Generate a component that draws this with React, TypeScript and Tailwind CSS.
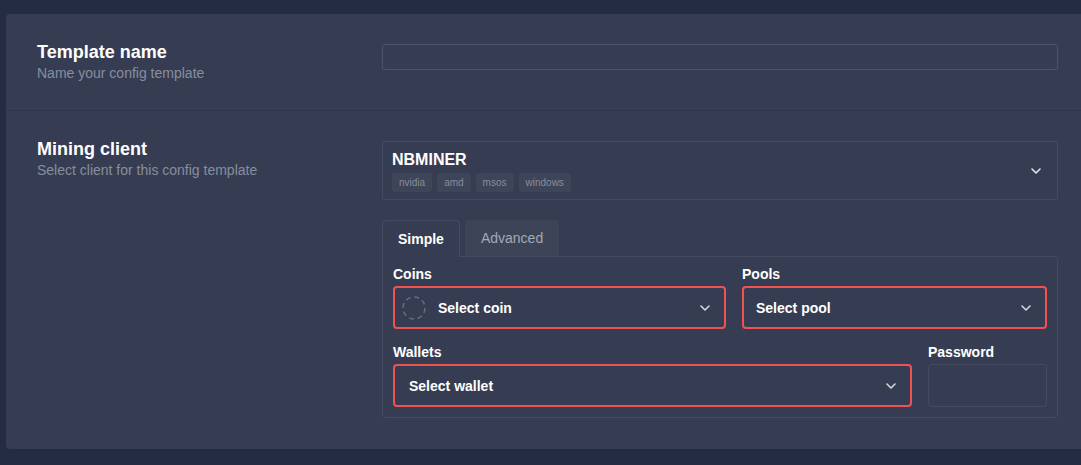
import React from "react";

const Chevron: React.FC<{ className?: string }> = ({ className }) => (
  <svg
    className={className}
    width="10"
    height="6"
    viewBox="0 0 10 6"
    fill="none"
    stroke="currentColor"
    strokeWidth="1.6"
    strokeLinecap="round"
    strokeLinejoin="round"
  >
    <path d="M1 1l4 4 4-4" />
  </svg>
);

const SelectBox: React.FC<{ label: string; icon?: boolean; padLeft: string }> = ({
  label,
  icon,
  padLeft,
}) => (
  <div
    className={`mt-[2px] flex h-[43px] items-center justify-between rounded-[4px] border-2 border-[#f05252] pr-[14px] ${padLeft}`}
  >
    <div className="flex items-center gap-[12px]">
      {icon && (
        <svg width="24" height="24" viewBox="0 0 24 24" fill="none">
          <circle
            cx="12"
            cy="12"
            r="11"
            stroke="#646b7d"
            strokeWidth="1.6"
            strokeDasharray="5 3.6"
          />
        </svg>
      )}
      <span className="text-sm font-bold leading-5 text-white">{label}</span>
    </div>
    <Chevron className="text-[#d4d7de]" />
  </div>
);

const tags = ["nvidia", "amd", "msos", "windows"];

export default function App() {
  return (
    <div className="h-[465px] w-[1081px] overflow-hidden bg-[#232c43] pl-[6px] pt-[14px] font-['Liberation_Sans',Arial,sans-serif]">
      <div className="w-[1100px] rounded-l-[4px] bg-[#363d52]">
        {/* Template name */}
        <div className="flex border-b border-[#2f3548] pb-[27px] pl-[31px] pt-[28px]">
          <div className="w-[345px]">
            <h2 className="text-[18px] font-bold leading-[21px] text-white">Template name</h2>
            <p className="text-sm leading-5 text-[#878e9e]">Name your config template</p>
          </div>
          <div className="w-[676px] pt-[2px]">
            <input className="block h-[26px] w-full rounded-[3px] border border-[#4b5366] bg-transparent outline-none" />
          </div>
        </div>

        {/* Mining client */}
        <div className="flex pb-[31px] pl-[31px] pt-[28px]">
          <div className="w-[345px]">
            <h2 className="text-[18px] font-bold leading-[21px] text-white">Mining client</h2>
            <p className="text-sm leading-5 text-[#878e9e]">Select client for this config template</p>
          </div>
          <div className="w-[676px] pt-[2px]">
            <div className="flex h-[59px] items-center justify-between rounded-[3px] border border-[#454c61] pl-[9px] pr-[16px]">
              <div className="flex flex-col">
                <div className="text-[16px] font-bold leading-5 text-white">NBMINER</div>
                <div className="mt-[3px] flex gap-[5px]">
                  {tags.map((t) => (
                    <span
                      key={t}
                      className="h-[19px] rounded-[3px] bg-[#3e4559] px-[7px] text-[10px] leading-[19px] text-[#868d9c]"
                    >
                      {t}
                    </span>
                  ))}
                </div>
              </div>
              <Chevron className="text-[#e5e7eb]" />
            </div>

            {/* Tabs */}
            <div className="mt-[20px] flex items-start gap-[5px]">
              <div className="relative z-10 -mb-px flex h-[37px] items-center rounded-t-[4px] border border-b-0 border-[#454c61] bg-[#363d52] px-[15px] text-sm font-bold text-white">
                Simple
              </div>
              <div className="flex h-[36px] items-center rounded-t-[4px] bg-[#3d4458] px-4 text-sm text-[#a3a9b6]">
                Advanced
              </div>
            </div>
            <div className="rounded-b-[4px] rounded-tr-[4px] border border-[#454c61] px-[10px] pb-[10px] pt-[7px]">
              <div className="flex gap-[16px]">
                <div className="w-[333px]">
                  <div className="text-sm font-bold leading-5 text-white">Coins</div>
                  <SelectBox label="Select coin" icon padLeft="pl-[7px]" />
                </div>
                <div className="flex-1">
                  <div className="text-sm font-bold leading-5 text-white">Pools</div>
                  <SelectBox label="Select pool" padLeft="pl-[12px]" />
                </div>
              </div>
              <div className="mt-[13px] flex gap-[16px]">
                <div className="flex-1">
                  <div className="text-sm font-bold leading-5 text-white">Wallets</div>
                  <SelectBox label="Select wallet" padLeft="pl-[14px]" />
                </div>
                <div className="w-[119px]">
                  <div className="text-sm font-bold leading-5 text-white">Password</div>
                  <input
                    type="password"
                    className="mt-[2px] block h-[43px] w-full rounded-[4px] border border-[#454c61] bg-transparent outline-none"
                  />
                </div>
              </div>
            </div>
          </div>
        </div>
      </div>
    </div>
  );
}
